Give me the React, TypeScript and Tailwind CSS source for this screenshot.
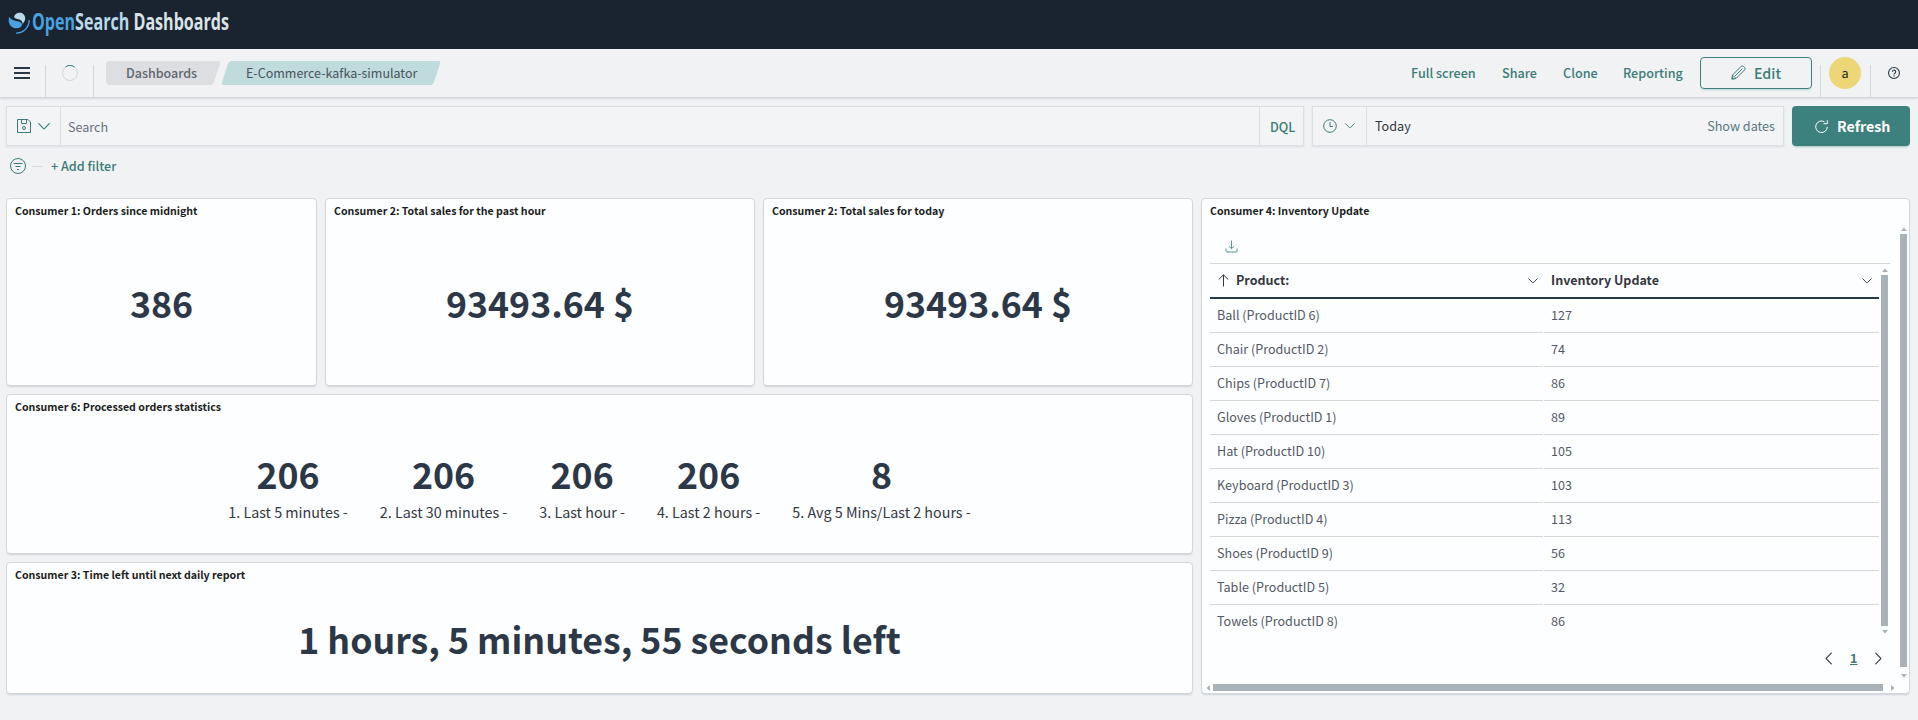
import React from "react";

const stats = [
  { value: "206", label: "1. Last 5 minutes -" },
  { value: "206", label: "2. Last 30 minutes -" },
  { value: "206", label: "3. Last hour -" },
  { value: "206", label: "4. Last 2 hours -" },
  { value: "8", label: "5. Avg 5 Mins/Last 2 hours -" },
];

const inventory = [
  ["Ball (ProductID 6)", "127"],
  ["Chair (ProductID 2)", "74"],
  ["Chips (ProductID 7)", "86"],
  ["Gloves (ProductID 1)", "89"],
  ["Hat (ProductID 10)", "105"],
  ["Keyboard (ProductID 3)", "103"],
  ["Pizza (ProductID 4)", "113"],
  ["Shoes (ProductID 9)", "56"],
  ["Table (ProductID 5)", "32"],
  ["Towels (ProductID 8)", "86"],
];

function Panel({ title, className, children }: { title: string; className: string; children: React.ReactNode }) {
  return (
    <section
      className={`flex flex-col rounded-[4px] border border-[#d3d7db] bg-[#fdfeff] shadow-[0_2px_2px_-1px_rgba(152,162,179,0.4)] ${className}`}
    >
      <h2 className="h-6 shrink-0 pl-2 text-[10.600px] leading-[24px] font-bold text-[#1a1c21]">{title}</h2>
      {children}
    </section>
  );
}

function BigValue({ children }: { children: React.ReactNode }) {
  return <div className="text-[35.700px] leading-[40px] font-bold whitespace-nowrap text-[#2c3848]">{children}</div>;
}

function Chevron({ className }: { className: string }) {
  return (
    <svg viewBox="0 0 12 7" fill="none" stroke="currentColor" strokeWidth="1.15" strokeLinecap="round" className={className}>
      <path d="M.7.7 5.600 5.600Q6 6 6.400 5.600L11.300.7" />
    </svg>
  );
}

function Triangle({ points, className }: { points: string; className: string }) {
  return (
    <svg viewBox="0 0 6 6" fill="#a9b1b9" className={className}>
      <polygon points={points} />
    </svg>
  );
}

function Logo() {
  return (
    <div className="flex items-center pl-2">
      <svg width="22" height="22" viewBox="0 0 64 64" className="mt-[2px]">
        <path fill="#b9d9eb" d="M18 13c2-8 10-12 18-11 10 2 15 10 14 18-1 6-4 11-8 14 1-8-5-11-12-13-7-2-13-4-12-8Z" />
        <path fill="#4aa1df" d="M4 14C-1 26 3 44 20 47c10 2 19-2 21-9 1-6-5-9-14-11C14 24 6 21 4 14Z" />
        <path fill="#4aa1df" d="M61.500 23a2 2 0 0 0-2 2c0 19-15.500 34.500-34.500 34.500a2 2 0 0 0 0 4C46 63.500 63.500 46 63.500 25a2 2 0 0 0-2-2Z" />
      </svg>
      <div className="ml-[2px] w-[200px] origin-left scale-x-[0.715] font-['Open_Sans'] text-[22.500px] leading-6 font-bold whitespace-nowrap">
        <span className="text-[#4aa1df]">Open</span>
        <span className="text-[#b9d9eb]">Search</span>
        <span className="text-[#dbe3e6]"> Dashboards</span>
      </div>
    </div>
  );
}

function NavBar() {
  return (
    <div className="flex h-[49px] shrink-0 items-start border-b border-[#d3d6da] text-[12.600px] shadow-[0_2px_2px_-1px_rgba(152,162,179,0.3)]">
      <div className="flex h-12 w-[45px] flex-col gap-[3px] pt-[18px] pl-[14px]">
        <span className="h-[2px] w-4 bg-[#293847]" />
        <span className="h-[2px] w-4 bg-[#293847]" />
        <span className="h-[2px] w-4 bg-[#293847]" />
      </div>
      <div className="mt-4 flex h-8 w-[49px] items-start justify-center border-x border-[#d3d6da]">
        <svg width="16" height="16" viewBox="0 0 16 16" fill="none">
          <circle cx="8" cy="8" r="7.500" stroke="#d3d6da" />
          <path d="M3.500 2A7.500 7.500 0 0 1 12.500 2" stroke="#3c817d" />
        </svg>
      </div>
      <div className="mt-3 ml-3 flex text-[12.500px] text-[#47535f]">
        <div className="relative h-6 w-[114px] pl-5 leading-6 font-medium text-[#5f666d]">
          <svg className="absolute inset-0" width="114" height="24" viewBox="0 0 114 24">
            <path fill="#dcdee2" d="M4 0H112Q115 0 114 3L108 21Q107 24 104 24H4Q0 24 0 20V4Q0 0 4 0Z" />
          </svg>
          <span className="relative">Dashboards</span>
        </div>
        <div className="relative ml-[2px] h-6 w-[218px] pl-6 leading-6">
          <svg className="absolute inset-0" width="218" height="24" viewBox="0 0 218 24">
            <path fill="#bfdbdb" d="M10 0H216Q219 0 218 3L212 21Q211 24 208 24H2Q-1 24 0 21L6 3Q7 0 10 0Z" />
          </svg>
          <span className="relative">E-Commerce-kafka-simulator</span>
        </div>
      </div>
      <div className="ml-auto flex h-12 items-center font-medium text-[#3c7b78]">
        <span className="w-[91px]">Full screen</span>
        <span className="w-[61px]">Share</span>
        <span className="w-[60px]">Clone</span>
        <span className="w-[77px]">Reporting</span>
        <button className="flex h-8 w-28 items-center rounded-[4px] border border-[#3c817d] pb-px pl-[30px] text-[14.200px] shadow-[0_2px_2px_-1px_rgba(60,129,125,0.3)]">
          <svg width="15" height="15" viewBox="0 0 15 15" fill="none" stroke="currentColor">
            <path d="M1 14 1.500 10 10.200 1.300a1.500 1.500 0 0 1 2.100 0l1.400 1.400a1.500 1.500 0 0 1 0 2.100L5 13.500ZM1.800 10.200 4.900 13.300M4 11l7.500-7.500" />
            <path fill="currentColor" stroke="none" d="M.8 11.500 3.500 14.200.6 14.400Z" />
          </svg>
          <span className="ml-[8px]">Edit</span>
        </button>
      </div>
      <div className="mt-4 ml-2 h-8 w-px bg-[#d3d6da]" />
      <div className="mt-2 ml-2 flex h-8 w-8 items-center justify-center rounded-full bg-[#ecd676] text-[12.600px] text-[#1a1c21]">
        a
      </div>
      <div className="mt-4 ml-[9px] h-8 w-px bg-[#d3d6da]" />
      <div className="flex h-12 w-[47px] items-start pt-[18px] pl-[17px]">
        <svg width="12" height="12" viewBox="0 0 13 13" fill="none" stroke="#293847" strokeWidth="1.2">
          <circle cx="6.500" cy="6.500" r="5.900" />
          <path d="M4.700 5.200a1.800 1.800 0 1 1 2.800 1.500c-.7.400-1 .7-1 1.300M6.500 9v1.200" />
        </svg>
      </div>
    </div>
  );
}

function QueryBar() {
  return (
    <div className="flex h-10 shrink-0 pr-2 pl-[6px] text-[12.600px]">
      <div className="flex w-[1298px] items-center border border-[#dcdfe3] bg-[#f3f4f6] shadow-[0_1px_2px_rgba(152,162,179,0.25)]">
        <div className="flex h-full w-[54px] items-center border-r border-[#dcdfe3] pl-[10px] text-[#3c7b78]">
          <svg width="14" height="14" viewBox="0 0 14 14" fill="none" stroke="currentColor">
            <path d="M.5.500H11L13.500 3v10.500H.500ZM4.500.500V4.500H9.500V.500" />
            <circle cx="7" cy="9" r="1.500" />
          </svg>
          <Chevron className="ml-[7px] h-[7px] w-3" />
        </div>
        <span className="pt-[2px] pl-[7px] text-[#69707d]">Search</span>
        <div className="ml-auto flex h-full w-[44px] items-center border-l border-[#dcdfe3] pt-px pl-[10px] font-medium text-[#3c7b78]">
          DQL
        </div>
      </div>
      <div className="ml-[8px] flex w-[472px] items-center border border-[#dcdfe3] bg-[#f3f4f6] shadow-[0_1px_2px_rgba(152,162,179,0.25)]">
        <div className="flex h-full w-[54px] items-center border-r border-[#dcdfe3] pl-[10px] text-[#3c7b78]">
          <svg width="14" height="14" viewBox="0 0 14 14" fill="none" stroke="currentColor">
            <circle cx="7" cy="7" r="6.300" />
            <path d="M7 3V7.500H10" />
          </svg>
          <Chevron className="ml-2 h-[6px] w-[10px]" />
        </div>
        <span className="pl-2 text-[#343741]">Today</span>
        <span className="mr-2 ml-auto text-[#55797f]">Show dates</span>
      </div>
      <button className="ml-2 flex w-[118px] items-center rounded-[4px] bg-[#3c817d] pl-[23px] text-[14.200px] font-bold text-white shadow-[0_2px_2px_-1px_rgba(60,129,125,0.4)]">
        <svg width="13" height="13" viewBox="0 0 13 13" fill="none" stroke="currentColor">
          <path d="M12.300 6.800A5.800 5.800 0 1 1 9.500 1.800M12.300.3V3.700H8.500" />
        </svg>
        <span className="ml-[9px]">Refresh</span>
      </button>
    </div>
  );
}

function InventoryPanel() {
  return (
    <Panel title="Consumer 4: Inventory Update" className="relative h-[496px] w-[709px] text-[12.600px]">
      <div className="ml-2 flex h-[41px] w-[680px] items-end border-b border-[#d3d7db] pb-[10px] pl-[15px]">
        <svg width="13" height="13" viewBox="0 0 13 13" fill="none" stroke="#3c817d" strokeOpacity="0.85">
          <path d="M6.500.500V8.500M4 6.300 6.500 8.700 9 6.300M1 8.500V11Q1 12 2 12H11Q12 12 12 11V8.500" />
        </svg>
      </div>
      <div className="ml-2 h-[374px] w-[669px] overflow-hidden">
        <div className="flex h-[35px] border-b-2 border-[#293847] text-[12.500px] leading-[34px] font-bold text-[#343741]">
          <div className="flex w-[334px] items-center pl-2">
            <svg width="11" height="13" viewBox="0 0 11 13" fill="none" stroke="currentColor">
              <path d="M5.500 12.500V1M.7 5.500 5.500.8 10.300 5.500" />
            </svg>
            <span className="mb-[2px] ml-[7px]">Product:</span>
            <Chevron className="mr-[6px] ml-auto h-[6px] w-[10px]" />
          </div>
          <div className="flex flex-1 items-center pl-[7px]">
            <span className="mb-[2px]">Inventory Update</span>
            <Chevron className="mr-[7px] ml-auto h-[6px] w-[10px]" />
          </div>
        </div>
        {inventory.map(([product, count]) => (
          <div key={product} className="group flex h-[34px] gap-px leading-[32px] text-[#535966]">
            <div className="w-[333px] border-b border-[#d3d7db] pl-[7px] group-last:border-transparent">{product}</div>
            <div className="flex-1 border-b border-[#d3d7db] pl-[7px] group-last:border-transparent">{count}</div>
          </div>
        ))}
      </div>
      <div className="mt-[10px] ml-auto flex h-5 w-[85px] items-center text-[#343741]">
        <Chevron className="-ml-[2px] h-[7px] w-[13px] rotate-90" />
        <span className="ml-[15px] font-bold text-[#3c7b78] underline">1</span>
        <Chevron className="ml-[15px] h-[7px] w-[13px] -rotate-90" />
      </div>
      {/* scroll bars float over the panel body */}
      <div className="absolute top-[68px] left-[679px] flex w-[7px] flex-col items-center">
        <Triangle points="0,5 3,1.500 6,5" className="h-[6px] w-[6px]" />
        <div className="mt-[2px] h-[351px] w-[7px] bg-[#a9b1b9]" />
        <Triangle points="0,1 3,4.500 6,1" className="mt-[3px] h-[6px] w-[6px]" />
      </div>
      <div className="absolute top-[27px] left-[698px] flex w-[7px] flex-col items-center">
        <Triangle points="0,5 3,1.500 6,5" className="h-[6px] w-[6px]" />
        <div className="mt-[2px] h-[433px] w-[7px] bg-[#a9b1b9]" />
        <Triangle points="0,1 3,4.500 6,1" className="mt-[6px] h-[6px] w-[6px]" />
      </div>
      <div className="absolute top-[485px] left-[3px] flex h-[7px] items-center">
        <Triangle points="5,0 1.500,3 5,6" className="h-[6px] w-[6px]" />
        <div className="ml-[2px] h-[7px] w-[670px] bg-[#a9b1b9]" />
        <Triangle points="1,0 4.500,3 1,6" className="ml-[7px] h-[6px] w-[6px]" />
      </div>
    </Panel>
  );
}

export default function App() {
  return (
    <div className="flex h-[720px] w-[1918px] flex-col overflow-hidden bg-[#f0f2f4] font-['Noto_Sans_CJK_SC',sans-serif] leading-5">
      <header className="h-[49px] shrink-0 bg-[#1a2430] pt-[10px]">
        <Logo />
      </header>
      <NavBar />
      <div className="h-2 shrink-0" />
      <QueryBar />
      <div className="flex h-[40px] shrink-0 items-center pl-[10px] text-[12.600px] font-medium text-[#3c7b78]">
        <svg width="16" height="16" viewBox="0 0 16 16" fill="none" stroke="currentColor">
          <circle cx="8" cy="8" r="7.500" />
          <path d="M3.500 5.500H12.500M5.500 8.500H10.500M7 11.500H9" />
        </svg>
        <span className="ml-[6px] h-px w-[10px] bg-[#d3d6da]" />
        <span className="ml-[9px]">+ Add filter</span>
      </div>
      <main className="flex gap-2 pt-3 pl-[6px]">
        <div className="flex flex-col gap-2">
          <div className="flex gap-2">
            <Panel title="Consumer 1: Orders since midnight" className="h-[188px] w-[311px]">
              <div className="flex flex-1 items-center justify-center pb-[3px]">
                <BigValue>386</BigValue>
              </div>
            </Panel>
            <Panel title="Consumer 2: Total sales for the past hour" className="h-[188px] w-[430px]">
              <div className="flex flex-1 items-center justify-center pb-[3px]">
                <BigValue>93493.64 $</BigValue>
              </div>
            </Panel>
            <Panel title="Consumer 2: Total sales for today" className="h-[188px] w-[430px]">
              <div className="flex flex-1 items-center justify-center pb-[3px]">
                <BigValue>93493.64 $</BigValue>
              </div>
            </Panel>
          </div>
          <Panel title="Consumer 6: Processed orders statistics" className="h-40 w-[1187px]">
            <div className="flex flex-1 items-center justify-center pt-[6px]">
              {stats.map((s) => (
                <div key={s.label} className="flex flex-col items-center px-4">
                  <BigValue>{s.value}</BigValue>
                  <div className="mt-[6px] text-[14.300px] leading-6 text-[#343741]">{s.label}</div>
                </div>
              ))}
            </div>
          </Panel>
          <Panel title="Consumer 3: Time left until next daily report" className="h-[132px] w-[1187px]">
            <div className="flex flex-1 items-center justify-center pb-[3px]">
              <BigValue>1 hours, 5 minutes, 55 seconds left</BigValue>
            </div>
          </Panel>
        </div>
        <InventoryPanel />
      </main>
    </div>
  );
}
